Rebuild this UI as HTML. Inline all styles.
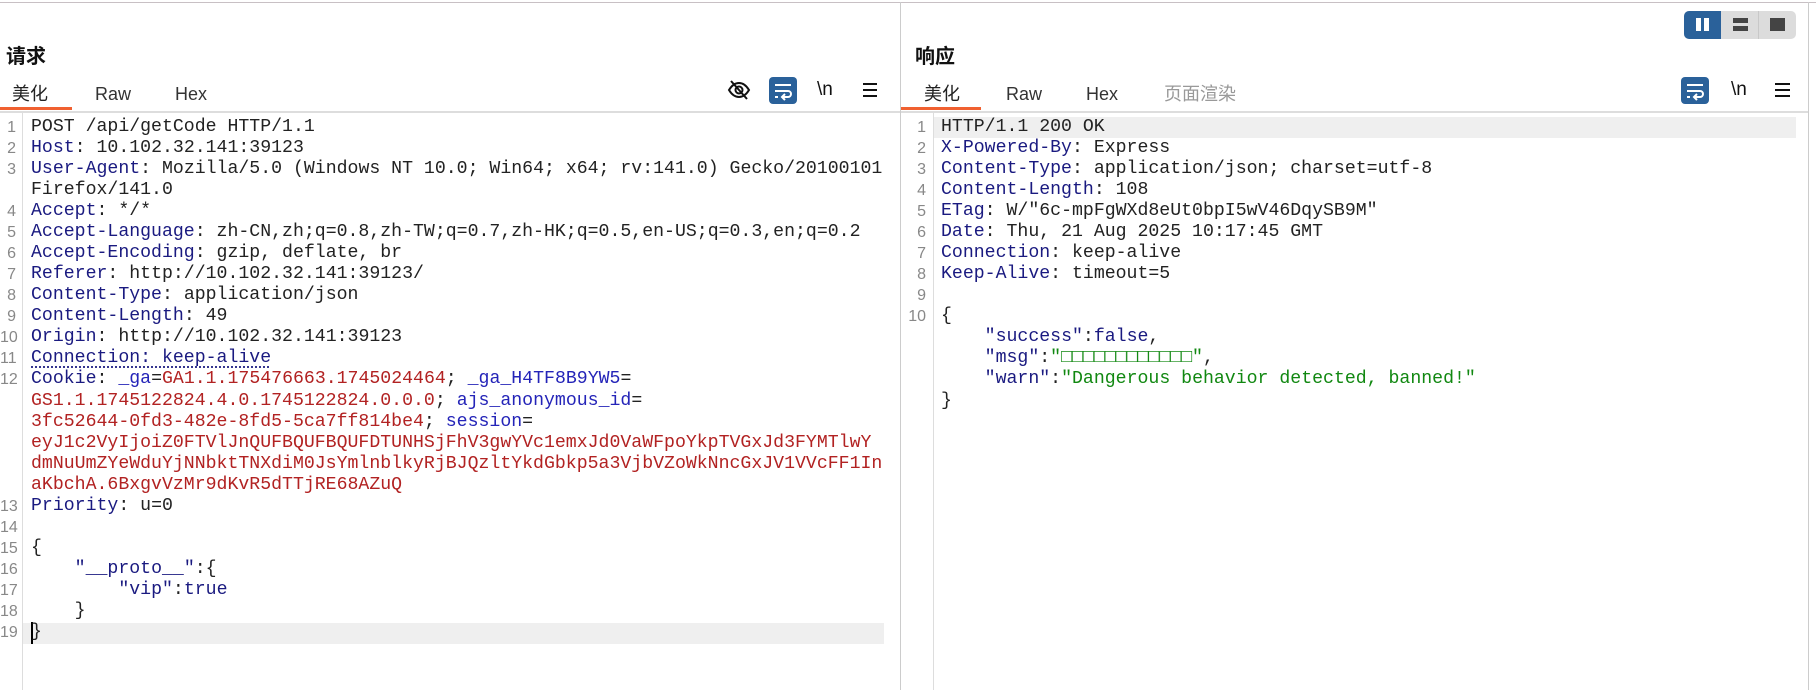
<!DOCTYPE html>
<html><head><meta charset="utf-8"><style>
*{margin:0;padding:0;box-sizing:border-box}
body{width:1816px;height:690px;background:#fff;position:relative;overflow:hidden;font-family:"Liberation Sans","Noto Sans CJK SC",sans-serif}
.abs{position:absolute}
.title{font-size:20px;font-weight:bold;color:#111;top:40px}
.tab{font-size:18px;color:#333;top:82px;height:24px;line-height:24px}
.tab span{display:block;line-height:24px}
.cj{font-family:'Noto Sans CJK SC',sans-serif;margin-top:-1px}
.la{margin-top:0px}
.code{position:absolute;font-family:"Liberation Mono",monospace;font-size:18.2px;line-height:21.08px;white-space:pre;color:#222}
.ln{position:absolute;font-family:"Liberation Sans",sans-serif;font-size:16px;line-height:21.08px;color:#888;text-align:right;white-space:pre}
.k{color:#1a1a80}.r{color:#b22222}.b{color:#2424b8}.g{color:#118811}
.u{text-decoration:underline dotted #1a1a80;text-underline-offset:4px}
</style></head><body>
<div class="abs" style="left:0;top:2px;width:1816px;height:1px;background:#c8c0c4"></div>
<div class="abs" style="left:900px;top:2px;width:1px;height:688px;background:#ccc"></div>
<div class="abs" style="left:1808px;top:2px;width:1px;height:688px;background:#ccc"></div>
<div class="abs" style="left:0;top:111px;width:900px;height:2px;background:#ddd"></div>
<div class="abs" style="left:901px;top:111px;width:907px;height:2px;background:#ddd"></div>
<div class="abs" style="left:0;top:107px;width:72px;height:3px;background:#f06030"></div>
<div class="abs" style="left:901px;top:107px;width:80px;height:3px;background:#f06030"></div>
<div class="abs" style="left:22px;top:113px;width:1px;height:577px;background:#ddd"></div>
<div class="abs" style="left:933px;top:113px;width:1px;height:577px;background:#ddd"></div>
<div class="abs" style="left:23px;top:623px;width:861px;height:21px;background:#efefef"></div>
<div class="abs" style="left:934px;top:117px;width:862px;height:21px;background:#efefef"></div>
<div class="abs" style="left:31px;top:622px;width:2px;height:22px;background:#000"></div>

<div class="abs title" style="left:6px">请求</div>
<div class="abs title" style="left:915px">响应</div>
<div class="abs tab" style="left:12px;color:#222"><span class="cj">美化</span></div>
<div class="abs tab" style="left:95px"><span class="la">Raw</span></div>
<div class="abs tab" style="left:175px"><span class="la">Hex</span></div>
<div class="abs tab" style="left:924px;color:#222"><span class="cj">美化</span></div>
<div class="abs tab" style="left:1006px"><span class="la">Raw</span></div>
<div class="abs tab" style="left:1086px"><span class="la">Hex</span></div>
<div class="abs tab" style="left:1164px;color:#999"><span class="cj">页面渲染</span></div>

<svg class="abs" style="left:727px;top:79px" width="24" height="22" viewBox="0 0 24 22"><path d="M2 11c3-5 6-7 10-7s7 2 10 7c-3 5-6 7-10 7s-7-2-10-7z" fill="none" stroke="#111" stroke-width="2"/><circle cx="12" cy="11" r="3.5" fill="none" stroke="#111" stroke-width="2"/><path d="M4 2l16 18" stroke="#111" stroke-width="2"/></svg>
<div class="abs" style="left:769px;top:77px;width:28px;height:27px;background:#2a619a;border-radius:4px"></div>
<svg class="abs" style="left:769px;top:77px" width="28" height="27" viewBox="0 0 28 27"><path d="M6 8h16M6 14h13a3 3 0 0 1 0 6h-5M16 17l-3 3 3 3M6 20h3" fill="none" stroke="#fff" stroke-width="2"/></svg>
<div class="abs" style="left:817px;top:79px;font-size:19px;color:#111">\n</div>
<div class="abs" style="left:863px;top:83px;width:14px;height:2px;background:#111;box-shadow:0 6px 0 #111,0 12px 0 #111"></div>
<div class="abs" style="left:1681px;top:77px;width:28px;height:27px;background:#2a619a;border-radius:4px"></div>
<svg class="abs" style="left:1681px;top:77px" width="28" height="27" viewBox="0 0 28 27"><path d="M6 8h16M6 14h13a3 3 0 0 1 0 6h-5M16 17l-3 3 3 3M6 20h3" fill="none" stroke="#fff" stroke-width="2"/></svg>
<div class="abs" style="left:1731px;top:79px;font-size:19px;color:#111">\n</div>
<div class="abs" style="left:1775px;top:83px;width:15px;height:2px;background:#111;box-shadow:0 6px 0 #111,0 12px 0 #111"></div>
<div class="abs" style="left:1684px;top:11px;width:112px;height:28px;background:#dcdcdc;border-radius:5px"></div>
<div class="abs" style="left:1684px;top:11px;width:37px;height:28px;background:#2a619a;border-radius:5px 0 0 5px"></div>
<div class="abs" style="left:1758px;top:11px;width:1px;height:28px;background:#c8c8c8"></div>
<div class="abs" style="left:1696px;top:18px;width:5px;height:13px;background:#fff"></div>
<div class="abs" style="left:1704px;top:18px;width:5px;height:13px;background:#fff"></div>
<div class="abs" style="left:1733px;top:18px;width:15px;height:5px;background:#444"></div>
<div class="abs" style="left:1733px;top:26px;width:15px;height:5px;background:#444"></div>
<div class="abs" style="left:1770px;top:18px;width:15px;height:13px;background:#444"></div>

<div class="ln" style="left:0;top:116.5px;width:16px">1
2
3

4
5
6
7
8
9
10
11
12





13
14
15
16
17
18
19</div>
<div class="code" style="left:31px;top:116.5px">POST /api/getCode HTTP/1.1
<span class="k">Host</span>: 10.102.32.141:39123
<span class="k">User-Agent</span>: Mozilla/5.0 (Windows NT 10.0; Win64; x64; rv:141.0) Gecko/20100101
Firefox/141.0
<span class="k">Accept</span>: */*
<span class="k">Accept-Language</span>: zh-CN,zh;q=0.8,zh-TW;q=0.7,zh-HK;q=0.5,en-US;q=0.3,en;q=0.2
<span class="k">Accept-Encoding</span>: gzip, deflate, br
<span class="k">Referer</span>: http://10.102.32.141:39123/
<span class="k">Content-Type</span>: application/json
<span class="k">Content-Length</span>: 49
<span class="k">Origin</span>: http://10.102.32.141:39123
<span class="k u">Connection: keep-alive</span>
<span class="k">Cookie</span>: <span class="b">_ga</span>=<span class="r">GA1.1.175476663.1745024464</span>; <span class="b">_ga_H4TF8B9YW5</span>=
<span class="r">GS1.1.1745122824.4.0.1745122824.0.0.0</span>; <span class="b">ajs_anonymous_id</span>=
<span class="r">3fc52644-0fd3-482e-8fd5-5ca7ff814be4</span>; <span class="b">session</span>=
<span class="r">eyJ1c2VyIjoiZ0FTVlJnQUFBQUFBQUFDTUNHSjFhV3gwYVc1emxJd0VaWFpoYkpTVGxJd3FYMTlwY</span>
<span class="r">dmNuUmZYeWduYjNNbktTNXdiM0JsYmlnblkyRjBJQzltYkdGbkp5a3VjbVZoWkNncGxJV1VVcFF1In</span>
<span class="r">aKbchA.6BxgvVzMr9dKvR5dTTjRE68AZuQ</span>
<span class="k">Priority</span>: u=0

{
    <span class="k">"__proto__"</span>:{
        <span class="k">"vip"</span>:<span class="k">true</span>
    }
}</div>
<div style="position:absolute;left:884px;top:113px;width:16px;height:577px;background:#fff"></div>

<div class="ln" style="left:906px;top:116.5px;width:20px">1
2
3
4
5
6
7
8
9
10</div>
<div class="code" style="left:941px;top:116.5px">HTTP/1.1 200 OK
<span class="k">X-Powered-By</span>: Express
<span class="k">Content-Type</span>: application/json; charset=utf-8
<span class="k">Content-Length</span>: 108
<span class="k">ETag</span>: W/"6c-mpFgWXd8eUt0bpI5wV46DqySB9M"
<span class="k">Date</span>: Thu, 21 Aug 2025 10:17:45 GMT
<span class="k">Connection</span>: keep-alive
<span class="k">Keep-Alive</span>: timeout=5

{
    <span class="k">"success"</span>:<span class="k">false</span>,
    <span class="k">"msg"</span>:<span class="g">"□□□□□□□□□□□□"</span>,
    <span class="k">"warn"</span>:<span class="g">"Dangerous behavior detected, banned!"</span>
}</div>
</body></html>
